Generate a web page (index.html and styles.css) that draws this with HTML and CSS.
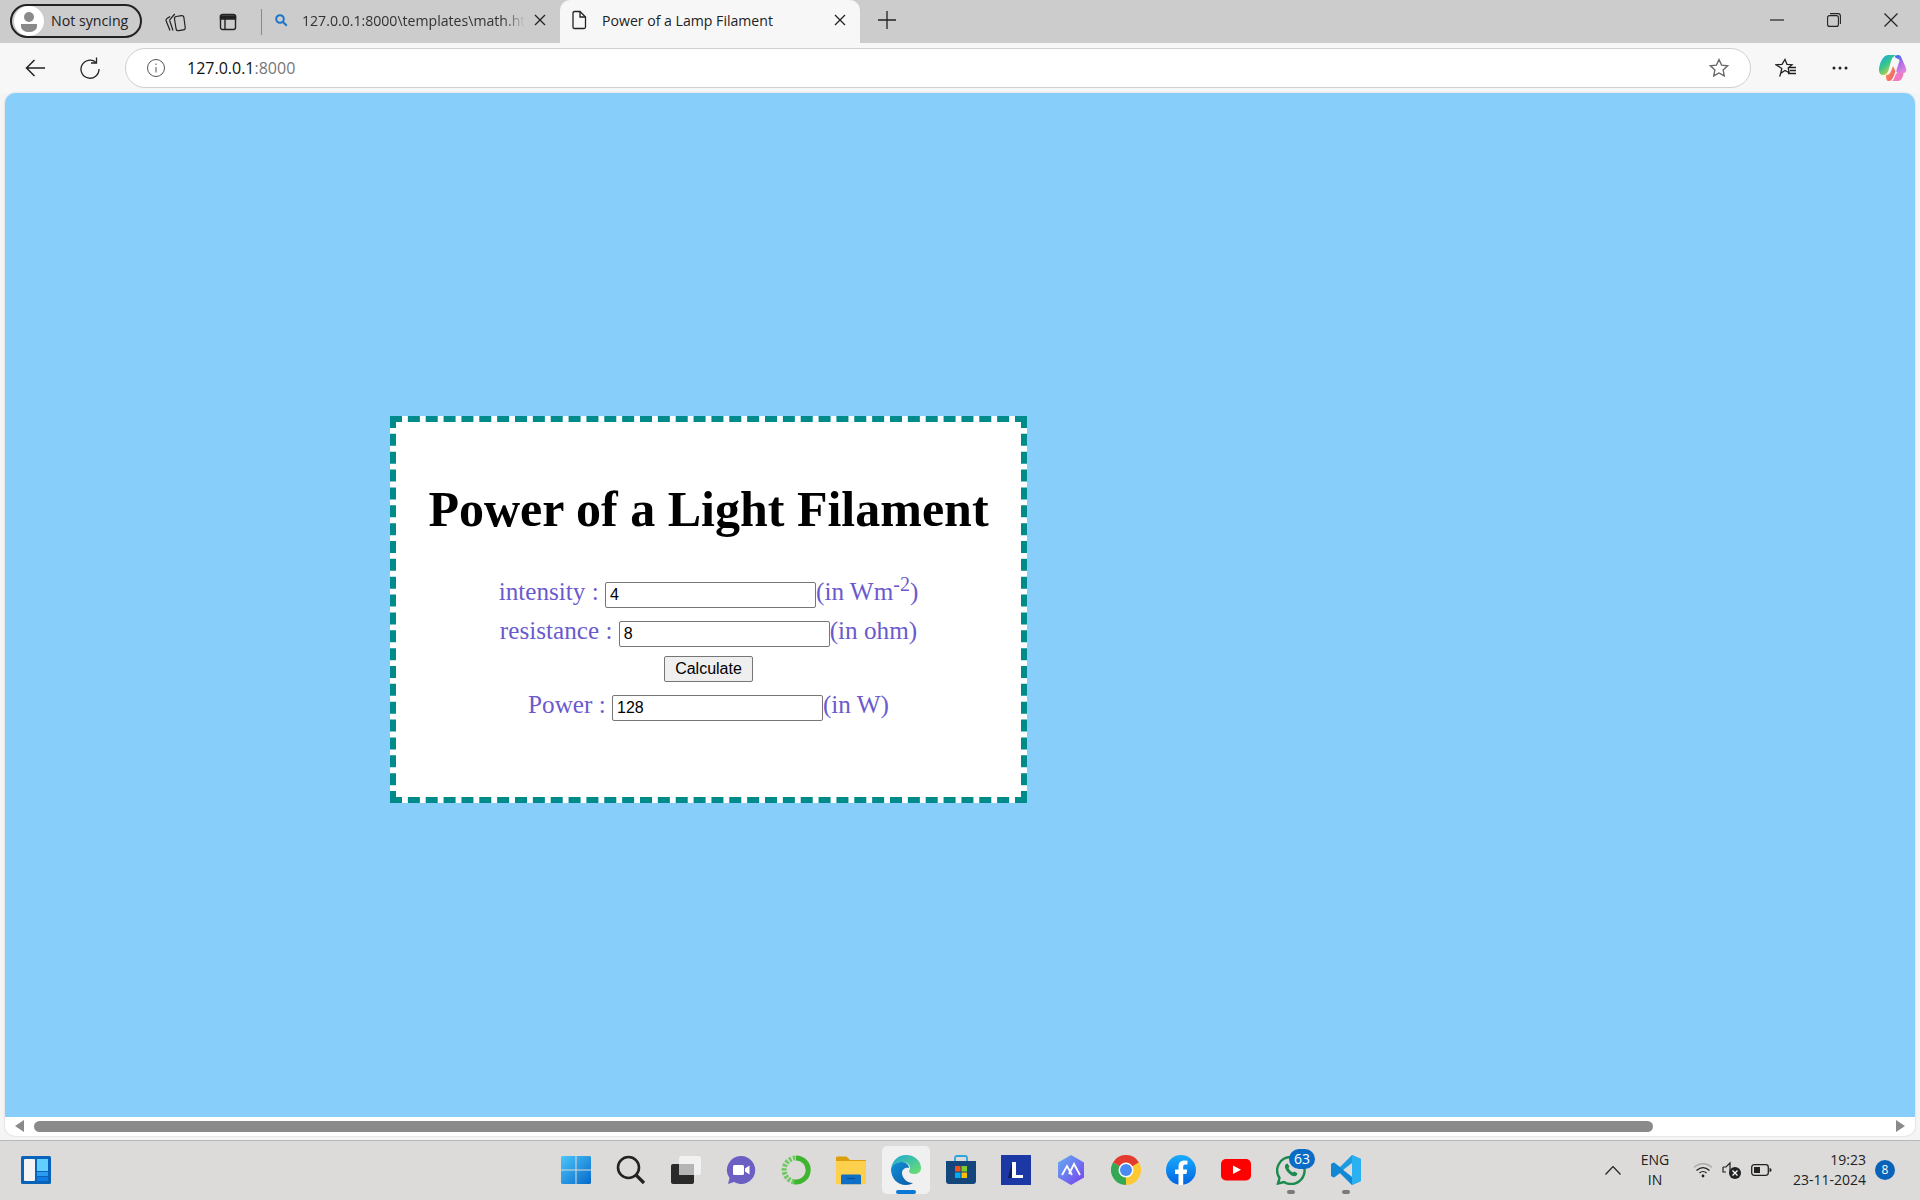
FILE: index.html
```html
<!DOCTYPE html>
<html lang="en">
<head>
  <meta charset="UTF-8" />
  <title>Power of a Lamp Filament</title>
  <link rel="stylesheet" href="styles.css">
</head>
<body>
  <div class="titlebar">
    <div class="profile">
      <svg class="avatar" width="30" height="30" viewBox="0 0 30 30"><circle cx="15" cy="15" r="15" fill="#fff"/><circle cx="15" cy="11" r="5" fill="#8a8a8a"/><path d="M7 18h16v2c0 4-4 6-8 6s-8-2-8-6z" fill="#8a8a8a"/></svg>
      <span>Not syncing</span>
    </div>
    <svg class="collections" width="21" height="20" viewBox="0 0 21 20" fill="none" stroke="#222" stroke-width="1.2"><path d="M5 18.500 1.200 9C.8 8 1 7.200 2 6.600L5 4.500"/><path d="M8 18.500 4.800 9c-.3-1 0-1.800 1-2.500l4-4.500"/><path d="M9.500 7c-.2-1.500.5-2.300 1.700-2.500l5.300-.8c1.300-.2 2.200.5 2.400 1.800l1.300 10c.2 1.300-.5 2.200-1.800 2.400l-4.800.8c-1.300.2-2.200-.5-2.500-1.700z"/></svg>
    <svg class="tabstrip" width="18" height="18" viewBox="0 0 18 18" fill="none" stroke="#222" stroke-width="1.4"><rect x="1.500" y="1.500" width="15" height="15" rx="2"/><path d="M1.500 3h15v3h-15z" fill="#222"/><path d="M6 6v10"/></svg>
    <div class="tab-sep"></div>
    <div class="tab">
      <svg class="tab-search" width="14" height="14" viewBox="0 0 14 14" fill="none" stroke="#1a76c9" stroke-width="2"><circle cx="6" cy="6" r="3.800"/><path d="m8.800 8.800 4 4"/></svg>
      <span class="tab-title tab-title-fade">127.0.0.1:8000\templates\math.html</span>
      <svg class="tab-close" width="12" height="12" viewBox="0 0 12 12" stroke="#222" stroke-width="1.300"><path d="m1 1 10 10M11 1 1 11"/></svg>
    </div>
    <div class="tab tab-active">
      <svg class="tab-doc" width="16" height="20" viewBox="0 0 16 20" fill="none" stroke="#222" stroke-width="1.300"><path d="M2 3c0-1 .5-1.500 1.500-1.500H9L14.500 7v10c0 1-.5 1.500-1.500 1.500H3.500c-1 0-1.500-.5-1.500-1.500z"/><path d="M9 1.500V7h5.500"/></svg>
      <span class="tab-title">Power of a Lamp Filament</span>
      <svg class="tab-close" width="12" height="12" viewBox="0 0 12 12" stroke="#222" stroke-width="1.300"><path d="m1 1 10 10M11 1 1 11"/></svg>
    </div>
    <svg class="newtab" width="20" height="20" viewBox="0 0 20 20" stroke="#222" stroke-width="1.300"><path d="M10 1v18M1 10h18"/></svg>
    <div class="window-controls">
      <svg width="14" height="14" viewBox="0 0 14 14" stroke="#222" stroke-width="1.200"><path d="M0 7h14"/></svg>
      <svg width="14" height="14" viewBox="0 0 14 14" fill="none" stroke="#222" stroke-width="1.100"><rect x=".6" y="2.600" width="10.800" height="10.800" rx="2"/><path d="M3 .6h8c1.500 0 2.400.9 2.400 2.400v8"/></svg>
      <svg width="14" height="14" viewBox="0 0 14 14" stroke="#222" stroke-width="1.200"><path d="m.5.5 13 13M13.500.5l-13 13"/></svg>
    </div>
  </div>

  <div class="toolbar">
    <svg class="back" width="20" height="18" viewBox="0 0 20 18" fill="none" stroke="#222" stroke-width="1.500"><path d="M20 9H1.500M9.500 1 1.500 9l8 8"/></svg>
    <svg class="reload" width="20" height="22" viewBox="0 0 20 22" fill="none" stroke="#222" stroke-width="1.300"><path d="M16 5.500A9 9 0 1 0 19 12"/><path d="M16.500 .5v5.500H11"/></svg>
    <div class="address">
      <svg width="20" height="20" viewBox="0 0 20 20" fill="none" stroke="#555" stroke-width="1"><circle cx="10" cy="10" r="8.500"/><path d="M10 9v5.500M10 5.500v1.500"/></svg>
      <span class="url">127.0.0.1<span class="url-port">:8000</span></span>
      <svg class="star" width="20" height="20" viewBox="0 0 20 20" fill="none" stroke="#666" stroke-width="1.300"><path d="m10 1.500 2.600 5.600 6 .7-4.500 4.100 1.200 6L10 15l-5.300 2.900 1.200-6L1.400 7.800l6-.7z"/></svg>
    </div>
    <svg class="favs" width="22" height="20" viewBox="0 0 22 20" fill="none" stroke="#222" stroke-width="1.300"><path d="m10 1.500 2 4.800 5 .4-3.800 3.300 1 4.800L10 12.500l-4.300 2.800 1.100-4.800L1 6.800l6-.5zM5.700 15.300l-1 3.300"/><path d="M14 9.500h7M15 12.500h6M13 15.500h8"/></svg>
    <svg class="more" width="16" height="4" viewBox="0 0 16 4" fill="#222"><circle cx="2" cy="2" r="1.500"/><circle cx="8" cy="2" r="1.500"/><circle cx="14" cy="2" r="1.500"/></svg>
    <svg class="copilot" width="28" height="26" viewBox="0 0 28 26">
      <defs>
        <linearGradient id="copA" x1="0" y1="0" x2=".7" y2="1"><stop offset="0" stop-color="#1aa0ee"/><stop offset=".5" stop-color="#35c78c"/><stop offset="1" stop-color="#f4cf3a"/></linearGradient>
        <linearGradient id="copB" x1=".3" y1="0" x2=".8" y2="1"><stop offset="0" stop-color="#3f6cf0"/><stop offset=".5" stop-color="#b56ee8"/><stop offset="1" stop-color="#e88ad8"/></linearGradient>
        <linearGradient id="copC" x1="0" y1="0" x2="1" y2="1"><stop offset="0" stop-color="#f8a23c"/><stop offset="1" stop-color="#f0507a"/></linearGradient>
      </defs>
      <path d="M9 0h8.500C14.500 1 13 3 12 6L9.500 15c-.8 3-2.500 5-5.500 5-2.500 0-4-2-4-5C0 9 4 0 9 0z" fill="url(#copA)"/>
      <path d="M15.500 2c1-1.300 2-2 3.500-2 2 0 3 1 3.800 3.500L27 13c.8 2.500 0 5-2.500 5h-5c-2 0-2.500-1.200-2-3l3-9c.2-1-.5-2-1.500-2z" fill="url(#copB)"/>
      <path d="M7 20c3 0 4.500-2 5.500-5l1.500-4 2.500 5c-.8 2-1.500 5-3 7.500-1 1.700-2.300 2.500-4 2.500-2 0-2.500-2-2.500-6z" fill="url(#copC)"/>
      <path d="M12 26h7c3 0 5-3.500 5.500-8h-5.500c-1.800 0-2.300 1-3 3-1 3-2 5-4 5z" fill="#f07ac0"/>
    </svg>
  </div>

  <div class="viewport">
    <main class="page">
      <div class="card">
        <h1>Power of a Light Filament</h1>
        <form class="calc">
          <div class="row"><label>intensity : </label><input type="text" value="4"><span>(in Wm<sup>-2</sup>)</span></div>
          <div class="row"><label>resistance : </label><input type="text" value="8"><span>(in ohm)</span></div>
          <div class="row row-btn"><button type="button">Calculate</button></div>
          <div class="row"><label>Power : </label><input type="text" value="128"><span>(in W)</span></div>
        </form>
      </div>
    </main>
    <div class="hscroll">
      <div class="arrow-left"></div>
      <div class="track"><div class="thumb"></div></div>
      <div class="arrow-right"></div>
    </div>
  </div>

  <footer class="taskbar">
    <svg class="widgets" width="30" height="28" viewBox="0 0 30 28"><rect width="30" height="28" rx="1.500" fill="#0a63b8"/><rect x="3" y="3" width="11" height="22" rx="1" fill="#f4f4f4"/><rect x="16" y="3" width="11" height="12" fill="#62d0ff"/><rect x="16" y="16" width="11" height="4" fill="#2a9df0"/><rect x="16" y="21" width="11" height="4" fill="#0f7ae0"/></svg>
    <div class="apps">
      <svg class="app" viewBox="0 0 30 30"><defs><linearGradient id="winG" x1="0" y1="0" x2="1" y2="1"><stop offset="0" stop-color="#4cc6fb"/><stop offset="1" stop-color="#0669c9"/></linearGradient></defs><path fill="url(#winG)" d="M1 1h13.500v13.500H0V2zM15.500 1H29l1 1v12.500H15.500zM0 15.500h14.500V29H1l-1-1zM15.500 15.500H30V28l-1 1H15.500z"/></svg>
      <svg class="app" viewBox="0 0 30 30" fill="none" stroke="#222" stroke-width="2.600"><circle cx="12.500" cy="12.500" r="10.500"/><path d="m20 20 8 8" stroke-width="3.200"/></svg>
      <svg class="app" viewBox="0 0 30 30"><rect x="0" y="9" width="23" height="20" rx="2" fill="#2a2a2a"/><rect x="8" y="1" width="22" height="19" rx="2" fill="#f4f4f4" fill-opacity=".85"/><rect x="8" y="9" width="15" height="11" fill="#b5b5b5"/></svg>
      <svg class="app" viewBox="0 0 30 30"><path d="M15 1a14 14 0 1 1-7 26l-6 2 1.500-6A14 14 0 0 1 15 1z" fill="#6b5fc4"/><rect x="7" y="10" width="11" height="10" rx="1.500" fill="#fff"/><path d="m19 13.500 4.500-3v9l-4.500-3z" fill="#fff"/></svg>
      <svg class="app" viewBox="0 0 30 30" fill="none"><path d="M15 3a12 12 0 1 1-2 23.800" stroke="#3fb52f" stroke-width="5"/><path d="M13 26.800A12 12 0 0 1 15 3" stroke="#6ec860" stroke-width="5" stroke-dasharray="2.500 1.500"/></svg>
      <svg class="app" viewBox="0 0 30 30"><path d="M0 3c0-1 .5-1.500 1.500-1.500h9L14 5h16v4H0z" fill="#dc9f0b"/><path d="M0 6h30v22c0 .8-.5 1.300-1.300 1.300H1.300C.5 29.300 0 28.800 0 28z" fill="#fcd04c"/><path d="M5 21c0-1 .5-1.500 1.500-1.500h17c1 0 1.500.5 1.500 1.500v8.300H5z" fill="#0f6fc6"/><path d="M11 23.500h8" stroke="#0a4c8c" stroke-width="1"/></svg>
      <div class="app-slot app-slot-active">
        <svg class="app" viewBox="0 0 30 30"><defs><linearGradient id="edgeG" x1="0" y1="0" x2="1" y2="1"><stop offset="0" stop-color="#1191d8"/><stop offset="1" stop-color="#0c59a4"/></linearGradient><linearGradient id="edgeH" x1="0" y1="0" x2="1" y2="1"><stop offset="0" stop-color="#1aa7d8"/><stop offset="1" stop-color="#6fe26a"/></linearGradient></defs><path d="M15 0c9 0 15 6 15 13 0 4-3 6-7 6-3 0-5-1-5-3 0-1 1-1 1-3 0-3-3-6-8-6S2 10 0 14C1 6 7 0 15 0z" fill="url(#edgeH)"/><path d="M0 14c2-5 6-7 11-7 4 0 7 3 7 6-3-1-7 1-7 5 0 5 5 10 11 10-2 1-4 2-7 2C6 30 0 23 0 14z" fill="url(#edgeG)"/></svg>
        <span class="active-bar"></span>
      </div>
      <svg class="app" viewBox="0 0 30 30"><path d="M9 6V3c0-1 .5-2 2-2h8c1.500 0 2 1 2 2v3" fill="none" stroke="#2aa5e0" stroke-width="1.800"/><path d="M0 6h30v20c0 2-1 3-3 3H3c-2 0-3-1-3-3z" fill="#14467c"/><rect x="9" y="11" width="5.500" height="5.500" fill="#f1511b"/><rect x="15.500" y="11" width="5.500" height="5.500" fill="#80cc28"/><rect x="9" y="17.500" width="5.500" height="5.500" fill="#00adef"/><rect x="15.500" y="17.500" width="5.500" height="5.500" fill="#fbbc09"/></svg>
      <svg class="app" viewBox="0 0 30 30"><rect width="30" height="30" fill="#1c38a4"/><path d="M11 7h4v13h7v3H11z" fill="#fff"/><path d="M11 7v16H7z" fill="#0e1c5c"/></svg>
      <svg class="app" viewBox="0 0 30 30"><defs><linearGradient id="meshG" x1="0" y1="0" x2="1" y2="1"><stop offset="0" stop-color="#62b0f0"/><stop offset="1" stop-color="#7a3ff0"/></linearGradient></defs><path d="M15 0 28 7.500v15L15 30 2 22.500v-15z" fill="url(#meshG)"/><path d="m6 20 5-9 5 9M13 19l5-10 6 11" fill="none" stroke="#fff" stroke-width="1.800"/></svg>
      <svg class="app" viewBox="0 0 30 30"><path d="M15 15 2 7.500A15 15 0 0 1 28 7.500z" fill="#e33b2e"/><path d="M15 15 28 7.500A15 15 0 0 1 15 30z" fill="#fcc934"/><path d="M15 15v15A15 15 0 0 1 2 7.500z" fill="#34a853"/><circle cx="15" cy="15" r="7.500" fill="#fff"/><circle cx="15" cy="15" r="6" fill="#4a8af4"/></svg>
      <svg class="app" viewBox="0 0 30 30"><defs><linearGradient id="fbG" x1="0" y1="0" x2="0" y2="1"><stop offset="0" stop-color="#18acfe"/><stop offset="1" stop-color="#0163e0"/></linearGradient></defs><circle cx="15" cy="15" r="15" fill="url(#fbG)"/><path d="M12.500 30V19H9v-4.500h3.500v-3c0-4 2.300-6 6-6l3 .3v3.700h-2c-1.800 0-2.300 1-2.300 2.200v2.800h4l-.7 4.500h-3.300v11z" fill="#fff"/></svg>
      <svg class="app" viewBox="0 0 30 30"><rect y="4" width="30" height="21.500" rx="5" fill="#f00"/><path d="m12 10.500 8 4.300-8 4.300z" fill="#fff"/></svg>
      <div class="app-slot">
        <svg class="app" viewBox="0 0 30 30"><path d="M15 2a13.500 13.500 0 1 1-7 25l-6 1.500L3.500 23A13.500 13.500 0 0 1 15 2z" fill="none" stroke="#1b8a4c" stroke-width="2.400"/><path d="M10 9c-2 2-1 5 2 8.500s6.500 4.500 8.500 3l1-2-3-2-1.500 1c-2-.8-3.500-2.500-4.500-4.500l1-1.500-2-3z" fill="#1b8a4c"/></svg>
        <span class="app-badge">63</span>
        <span class="running-dot"></span>
      </div>
      <div class="app-slot">
        <svg class="app" viewBox="0 0 30 30"><path d="M21 0 9 12 3 7.500 0 9v12l3 1.500L9 18l12 12 9-4V4zm0 8v14l-9-7z" fill="#1a9be2"/><path d="M21 0l9 4v22l-9 4z" fill="#2bb0f2"/><path d="M0 9l3-1.500 18 14.500v8L9 18l-6 4.500L0 21z" fill="#0a78c6" fill-opacity=".55"/></svg>
        <span class="running-dot"></span>
      </div>
    </div>
    <div class="tray">
      <svg class="chevron" width="16" height="9" viewBox="0 0 16 9" fill="none" stroke="#222" stroke-width="1.200"><path d="m.5 8.500 7.500-8 7.500 8"/></svg>
      <div class="lang">ENG<br>IN</div>
      <svg class="wifi" width="20" height="16" viewBox="0 0 20 16" fill="none" stroke-width="1.300"><path d="M1 5.500c5-5 13-5 18 0" stroke="#aaa"/><path d="M3.500 8.500c4-3.500 9-3.500 13 0M6.500 11c2-1.800 5-1.800 7 0" stroke="#222"/><circle cx="10" cy="14" r="1.400" fill="#222"/></svg>
      <svg class="sound" width="20" height="18" viewBox="0 0 20 18"><path d="M1 6h3l4-4v10" fill="none" stroke="#222" stroke-width="1.200"/><path d="M1 6v5h3" fill="none" stroke="#222" stroke-width="1.200"/><circle cx="13" cy="12" r="6" fill="#222"/><path d="m10.500 9.500 5 5M15.500 9.500l-5 5" stroke="#fff" stroke-width="1.300"/></svg>
      <svg class="battery" width="21" height="14" viewBox="0 0 21 14"><rect x=".7" y="1.700" width="16.600" height="10.600" rx="2.500" fill="none" stroke="#222" stroke-width="1.300"/><rect x="3" y="4" width="6" height="6" fill="#222"/><path d="M18.500 5c1.500 0 2 1 2 2s-.5 2-2 2z" fill="#222"/></svg>
      <div class="clock">19:23<br>23-11-2024</div>
      <span class="notify">8</span>
    </div>
  </footer>
</body>
</html>
```

FILE: styles.css
```css
* { box-sizing: border-box; }

html, body { height: 100%; }

body {
  margin: 0;
  height: 1200px;
  overflow: hidden;
  display: flex;
  flex-direction: column;
  background: #f5f5f5;
  font-family: "Open Sans", "Noto Sans", sans-serif;
  color: #222;
}

/* browser title bar */
.titlebar {
  height: 43px;
  flex: none;
  display: flex;
  align-items: center;
  background: #cccccc;
  padding-left: 10px;
}

.profile {
  width: 132px;
  height: 34px;
  flex: none;
  margin-top: -2px;
  display: flex;
  align-items: center;
  gap: 7px;
  padding-left: 2px;
  border: 2px solid #222;
  border-radius: 17px;
  font-size: 14.2px;
}

.collections { margin-left: 23px; flex: none; }
.tabstrip { margin-left: 33px; flex: none; }

.tab-sep {
  width: 1px;
  height: 26px;
  margin-left: 24px;
  background: #888;
  flex: none;
}

.tab {
  width: 298px;
  height: 43px;
  flex: none;
  display: flex;
  align-items: center;
  padding: 0 14px 3px 12px;
  font-size: 14.1px;
}

.tab-search { flex: none; margin-right: 14px; }

.tab-title {
  flex: 1;
  white-space: nowrap;
  overflow: hidden;
}

.tab-title-fade {
  color: #333;
  margin-right: 9px;
  -webkit-mask-image: linear-gradient(to right, #000 90%, transparent 100%);
  mask-image: linear-gradient(to right, #000 90%, transparent 100%);
}

.tab-close { flex: none; }

.tab-active {
  width: 300px;
  background: #f7f7f7;
  border-radius: 10px 10px 0 0;
  padding-left: 11px;
}

.tab-doc { flex: none; margin-right: 15px; }

.newtab { margin-left: 17px; margin-top: -4px; flex: none; }

.window-controls {
  margin-left: auto;
  padding-right: 22px;
  margin-top: -4px;
  display: flex;
  gap: 43px;
}

/* toolbar */
.toolbar {
  height: 50px;
  flex: none;
  display: flex;
  align-items: center;
  background: #f7f7f7;
  padding-left: 25px;
}

.reload { margin-left: 35px; flex: none; }

.address {
  width: 1626px;
  height: 40px;
  flex: none;
  margin-left: 25px;
  display: flex;
  align-items: center;
  padding: 0 21px 0 20px;
  background: #fff;
  border: 1px solid #d0d0d0;
  border-radius: 20px;
}

.url {
  margin-left: 21px;
  font-size: 16px;
  color: #111;
}

.url-port { color: #777; }

.star { margin-left: auto; }

.favs { margin-left: 24px; flex: none; }
.more { margin-left: 35px; flex: none; }
.copilot { margin-left: 31px; flex: none; }

/* page area */
.viewport {
  width: 1910px;
  height: 1043px;
  flex: none;
  margin-left: 5px;
  display: flex;
  flex-direction: column;
  background: #fff;
  border-radius: 10px;
  overflow: hidden;
  box-shadow: 0 0 2px rgba(0, 0, 0, 0.2);
}

.page {
  height: 1024px;
  flex: none;
  background: #87cefa;
  padding: 323px 0 0 385px;
}

.card {
  width: 637px;
  height: 387px;
  padding-top: 60px;
  background: #fff;
  border: 6px dashed #008b8b;
  text-align: center;
  font-family: "Liberation Serif", "Times New Roman", serif;
}

h1 {
  margin: 0 0 35px;
  font-size: 50px;
  line-height: 55px;
  color: #000;
}

.row {
  height: 39px;
  font-size: 25.2px;
  line-height: 39px;
  color: #6a5acd;
  white-space: nowrap;
}

.row-btn { height: 35px; padding-top: 6px; line-height: 26px; }

.row input {
  width: 211px;
  height: 26px;
  padding: 1px 4px;
  border: 1px solid #767676;
  border-radius: 2px;
  font: 16px "Liberation Sans", Arial, sans-serif;
  color: #000;
  background: #fff;
}

sup { font-size: 20px; line-height: 0; }

button {
  width: 89px;
  height: 26px;
  padding: 0;
  border: 1px solid #767676;
  border-radius: 2px;
  background: #efefef;
  font: 16px "Liberation Sans", Arial, sans-serif;
  color: #000;
  vertical-align: top;
}

.hscroll {
  height: 19px;
  flex: none;
  display: flex;
  align-items: center;
  padding: 0 10px 1px;
}

.arrow-left {
  width: 0;
  height: 0;
  border-top: 6px solid transparent;
  border-bottom: 6px solid transparent;
  border-right: 9px solid #8a8a8a;
}

.arrow-right {
  width: 0;
  height: 0;
  border-top: 6px solid transparent;
  border-bottom: 6px solid transparent;
  border-left: 9px solid #8a8a8a;
}

.track {
  flex: 1;
  padding: 0 12px 0 10px;
}

.thumb {
  width: 1619px;
  height: 11px;
  background: #8a8a8a;
  border-radius: 6px;
}

/* windows taskbar */
.taskbar {
  position: relative;
  height: 60px;
  flex: none;
  margin-top: 4px;
  display: flex;
  align-items: center;
  background: #dcdbd9;
  border-top: 1px solid #b8b8b8;
  padding: 0 0 1px 21px;
}

.widgets { flex: none; }

.apps {
  margin-left: 510px;
  display: flex;
  align-items: center;
  gap: 25px;
}

.app {
  width: 30px;
  height: 30px;
  flex: none;
  display: block;
}

.app-slot { position: relative; width: 30px; height: 30px; }

.app-slot-active::before {
  content: "";
  position: absolute;
  left: -9px;
  top: -9px;
  width: 48px;
  height: 48px;
  background: #f0f0f0;
  border-radius: 5px;
}

.app-slot-active .app { position: relative; }

.active-bar {
  position: absolute;
  left: 5px;
  top: 35px;
  width: 20px;
  height: 4px;
  background: #0a78d4;
  border-radius: 2px;
}

.running-dot {
  position: absolute;
  left: 11px;
  top: 35px;
  width: 8px;
  height: 4px;
  background: #7a7a7a;
  border-radius: 2px;
}

.app-badge {
  position: absolute;
  left: 13px;
  top: -6px;
  width: 26px;
  height: 20px;
  background: #0a6cc4;
  border-radius: 10px;
  color: #fff;
  font-size: 14px;
  line-height: 20px;
  text-align: center;
}

.tray {
  margin-left: auto;
  display: flex;
  align-items: center;
  height: 100%;
  padding-right: 25px;
  font-size: 14px;
  color: #222;
}

.chevron { flex: none; }

.lang {
  width: 40px;
  margin-left: 14px;
  text-align: center;
  line-height: 20px;
}

.wifi { margin-left: 18px; flex: none; }
.sound { margin-left: 9px; flex: none; }
.battery { margin-left: 9px; flex: none; }

.clock {
  width: 80px;
  margin-left: 14px;
  text-align: right;
  line-height: 20px;
  white-space: nowrap;
}

.notify {
  width: 20px;
  height: 20px;
  margin-left: 9px;
  border-radius: 50%;
  background: #0a63b8;
  color: #fff;
  font-size: 12px;
  line-height: 20px;
  text-align: center;
}
```
